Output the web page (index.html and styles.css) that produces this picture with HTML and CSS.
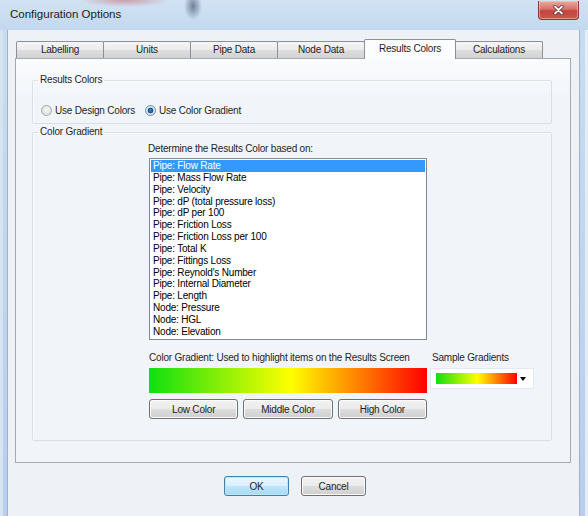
FILE: index.html
```html
<!DOCTYPE html>
<html lang="en">
<head>
    <meta charset="UTF-8">
    <meta name="viewport" content="width=device-width, initial-scale=1.0">
    <title>Configuration Options</title>
    <link rel="stylesheet" href="styles.css">
</head>
<body>
    <div class="window">
        <div class="titlebar">
            <span class="title">Configuration Options</span>
            <button class="close" type="button" aria-label="Close">
                <svg width="11" height="10" viewBox="0 0 11 10">
                    <path d="M2 1.5 L9 8.5 M9 1.5 L2 8.5" stroke="#5a2424" stroke-width="3.2" stroke-linecap="round"/>
                    <path d="M2 1.5 L9 8.5 M9 1.5 L2 8.5" stroke="#ffffff" stroke-width="1.8" stroke-linecap="round"/>
                </svg>
            </button>
        </div>

        <div class="client">
            <div class="tabs">
                <div class="tab">Labelling</div>
                <div class="tab">Units</div>
                <div class="tab">Pipe Data</div>
                <div class="tab">Node Data</div>
                <div class="tab active">Results Colors</div>
                <div class="tab">Calculations</div>
            </div>

            <div class="panel">
                <fieldset class="group group-mode">
                    <legend>Results Colors</legend>
                    <div class="radios">
                        <label class="radio"><span class="dot"></span>Use Design Colors</label>
                        <label class="radio checked"><span class="dot"></span>Use Color Gradient</label>
                    </div>
                </fieldset>

                <fieldset class="group group-gradient">
                    <legend>Color Gradient</legend>
                    <div class="gradient-body">
                        <div class="caption">Determine the Results Color based on:</div>
                        <ul class="listbox">
                            <li class="selected">Pipe: Flow Rate</li>
                            <li>Pipe: Mass Flow Rate</li>
                            <li>Pipe: Velocity</li>
                            <li>Pipe: dP (total pressure loss)</li>
                            <li>Pipe: dP per 100</li>
                            <li>Pipe: Friction Loss</li>
                            <li>Pipe: Friction Loss per 100</li>
                            <li>Pipe: Total K</li>
                            <li>Pipe: Fittings Loss</li>
                            <li>Pipe: Reynold's Number</li>
                            <li>Pipe: Internal Diameter</li>
                            <li>Pipe: Length</li>
                            <li>Node: Pressure</li>
                            <li>Node: HGL</li>
                            <li>Node: Elevation</li>
                        </ul>

                        <div class="gradient-row">
                            <div class="gradient-main">
                                <div class="caption">Color Gradient: Used to highlight items on the Results Screen</div>
                                <div class="bar"></div>
                                <div class="bar-buttons">
                                    <button class="btn" type="button">Low Color</button>
                                    <button class="btn" type="button">Middle Color</button>
                                    <button class="btn" type="button">High Color</button>
                                </div>
                            </div>
                            <div class="gradient-side">
                                <div class="caption side-caption">Sample Gradients</div>
                                <div class="combo">
                                    <span class="swatch"></span>
                                    <span class="arrow"></span>
                                </div>
                            </div>
                        </div>
                    </div>
                </fieldset>
            </div>

            <div class="actions">
                <button class="btn btn-dialog default" type="button">OK</button>
                <button class="btn btn-dialog" type="button">Cancel</button>
            </div>
        </div>
    </div>
</body>
</html>
```

FILE: styles.css
```css
body {
    margin: 0;
    font-family: "Liberation Sans", Arial, sans-serif;
    font-size: 10px;
    letter-spacing: -0.2px;
    color: #1e1e1e;
}
.window {
    width: 588px;
    height: 516px;
    display: flex;
    flex-direction: column;
    overflow: hidden;
    background: linear-gradient(to bottom, #c9dcf1, #b6cfee);
    box-shadow: inset 3px 0 #d6e3f1, inset -3px 0 #e4ecf6;
}

/* title bar */
.titlebar {
    height: 30px;
    flex: none;
    display: flex;
    justify-content: space-between;
    align-items: flex-start;
    background:
        radial-gradient(ellipse 9px 14px at 193px 6px, rgba(70, 88, 115, 0.7), rgba(70, 88, 115, 0)),
        radial-gradient(ellipse 45px 7px at 125px 0, rgba(200, 110, 120, 0.6), rgba(200, 110, 120, 0)),
        linear-gradient(to bottom, #d2e2f3, #c3d8ee);
}
.title {
    margin: 8px 0 0 10px;
    font-size: 11.5px;
    line-height: 13px;
    letter-spacing: 0;
    color: #1b1b1b;
}
.close {
    width: 41px;
    height: 19px;
    margin: 1px 9px 0 0;
    padding: 0;
    display: flex;
    align-items: center;
    justify-content: center;
    border: 1px solid #8b3b36;
    border-top: none;
    border-radius: 0 0 4px 4px;
    background: linear-gradient(to bottom, #e9aa9e 0%, #d5736a 45%, #c3443d 55%, #c95a4c 100%);
    box-shadow: inset 0 0 0 1px rgba(255, 220, 210, 0.45);
}

/* client area */
.client {
    flex: 1;
    margin: 0 8px 0 7px;
    padding-top: 11px;
    border-left: 1px solid #a3b1c4;
    border-right: 1px solid #a3b1c4;
    background-color: #eef2f7;
}
.tabs {
    display: flex;
    align-items: flex-end;
    height: 17px;
    margin-left: 8px;
}
.tab {
    width: 88px;
    height: 17px;
    box-sizing: border-box;
    margin-left: -1px;
    border: 1px solid #8c9099;
    border-bottom: none;
    border-radius: 2px 2px 0 0;
    background: linear-gradient(to bottom, #f5f5f5 0%, #ebebeb 50%, #dedede 51%, #d2d2d2 100%);
    text-align: center;
    line-height: 16px;
}
.tab:first-child {
    margin-left: 0;
}
.tab.active {
    position: relative;
    z-index: 1;
    width: 92px;
    height: 20px;
    margin-bottom: -1px;
    background: #fcfdfe;
    line-height: 17px;
}
.panel {
    width: 556px;
    height: 405px;
    box-sizing: border-box;
    margin-left: 7px;
    padding: 15px 0 0 16px;
    border: 1px solid #a2aab3;
    background: linear-gradient(to bottom, #fafbfd, #f1f5f9 40px);
}

/* group boxes */
.group {
    width: 520px;
    box-sizing: border-box;
    margin: 0;
    padding: 0;
    border: 1px solid #d8dfe6;
    border-radius: 2px;
    box-shadow: inset 1px 1px #fbfcfd;
}
.group legend {
    margin-left: 5px;
    padding: 0 2px;
    line-height: 12px;
}
.group-mode {
    padding-bottom: 6px;
}
.group-gradient {
    margin-top: 2px;
    padding-bottom: 21px;
}
.radios {
    display: flex;
    align-items: center;
    gap: 10px;
    height: 14px;
    margin-top: 17px;
    padding-left: 8px;
}
.radio {
    display: flex;
    align-items: center;
    gap: 3px;
}
.dot {
    width: 11px;
    height: 11px;
    box-sizing: border-box;
    border: 1px solid #a2a4a7;
    border-radius: 50%;
    background: radial-gradient(circle at 50% 40%, #f6f6f6, #d9d9d9);
}
.radio.checked .dot {
    border-color: #6f8fb0;
    background: radial-gradient(circle, #3f8fd0 0, #124a84 2.5px, #dde8f2 3.2px, #c9d6e2 100%);
}

.gradient-body {
    margin-left: 115px;
}
.caption {
    margin-top: 5px;
    line-height: 12px;
    white-space: nowrap;
}
.listbox {
    width: 278px;
    height: 182px;
    box-sizing: border-box;
    margin: 3px 0 0 1px;
    padding: 1px;
    list-style: none;
    border: 1px solid #848a93;
    background-color: #ffffff;
    color: #000000;
}
.listbox li {
    height: 11.85px;
    line-height: 11.85px;
    padding-left: 2px;
}
.listbox li.selected {
    background-color: #3399ff;
    color: #ffffff;
}
.gradient-row {
    display: flex;
    margin-top: 12px;
    padding-left: 1px;
}
.gradient-row .caption {
    margin-top: 0;
}
.gradient-main {
    width: 278px;
}
.bar {
    height: 25px;
    margin-top: 4px;
    background: linear-gradient(to right, #10e010, #ffff00 51%, #ff0000);
}
.bar-buttons {
    display: grid;
    grid-template-columns: 1fr 1fr 1fr;
    gap: 5px;
    margin-top: 6px;
}
.gradient-side {
    margin-left: 3px;
}
.side-caption {
    padding-left: 2px;
}
.combo {
    width: 104px;
    height: 21px;
    box-sizing: border-box;
    margin-top: 4px;
    padding: 0 5px;
    display: flex;
    align-items: center;
    justify-content: space-between;
    border: 1px solid #e4e9ef;
    background-color: #ffffff;
}
.swatch {
    width: 81px;
    height: 11px;
    background: linear-gradient(to right, #10e010, #ffff00 51%, #ff0000);
}
.arrow {
    width: 0;
    height: 0;
    margin-right: 2px;
    border-left: 3.5px solid transparent;
    border-right: 3.5px solid transparent;
    border-top: 4px solid #000000;
}

/* buttons */
.btn {
    height: 20px;
    padding: 0;
    font-family: "Liberation Sans", Arial, sans-serif;
    font-size: 10px;
    letter-spacing: -0.2px;
    color: #1e1e1e;
    border: 1px solid #707070;
    border-radius: 3px;
    background: linear-gradient(to bottom, #f2f2f2 0%, #ebebeb 50%, #dddddd 51%, #cfcfcf 100%);
    box-shadow: inset 0 0 0 1px #fbfbfb;
}
.actions {
    display: flex;
    justify-content: center;
    gap: 12px;
    margin-top: 13px;
    padding-left: 3px;
}
.btn-dialog {
    width: 65px;
}
.btn-dialog.default {
    border-color: #3c7fb1;
    background: linear-gradient(to bottom, #eaf6fd 0%, #d9f0fc 50%, #bee6fd 51%, #a7d9f5 100%);
    box-shadow: inset 0 0 0 1px #c6e6f8;
}
```
